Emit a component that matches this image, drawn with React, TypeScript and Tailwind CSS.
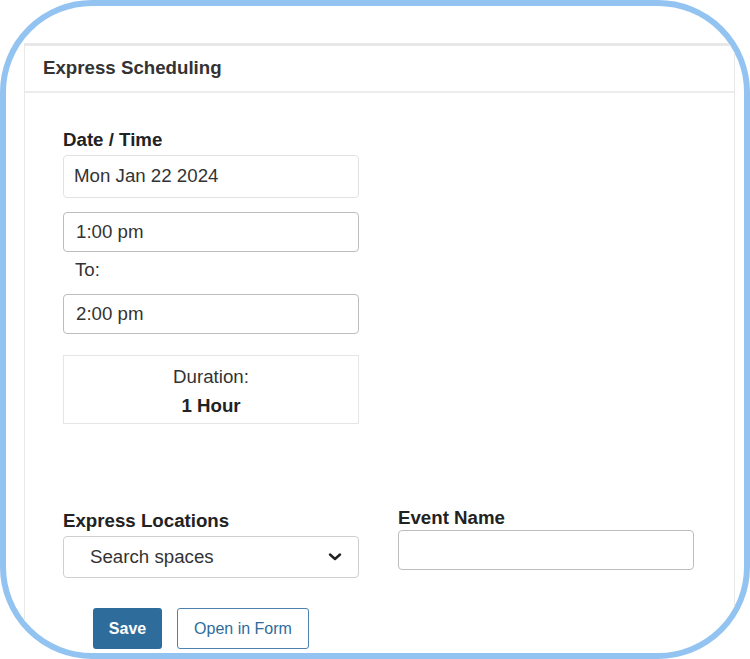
import React from 'react';

const font = { fontFamily: '"Liberation Sans", Arial, Helvetica, sans-serif' };

const App: React.FC = () => {
  return (
    <div className="w-[750px] h-[659px] bg-white text-[#333]" style={font}>
      {/* Rounded blue frame */}
      <div className="h-full rounded-[92px] border-[6px] border-[#93c4f1] overflow-hidden pl-[18px] pt-[37px] pr-[9px]">
        {/* Panel */}
        <div className="h-[700px] border-t-[3px] border-x border-[#e8e8e8]">
          <div className="h-[47px] border-b-2 border-[#ececec] flex items-center pl-[18px] text-[18.7px] font-bold text-[#333]">
            Express Scheduling
          </div>

          <div className="pl-[38px] pt-[36px]">
            <div className="w-[296px]">
              <p className="text-[18.7px] leading-[22px] font-bold text-[#222]">Date / Time</p>
              <div className="mt-[4px] h-[43px] border border-[#e2e2e2] rounded-[4px] flex items-center pl-[10px] text-[18.7px]">
                Mon Jan 22 2024
              </div>
              <div className="mt-[14px] h-[40px] border border-[#bdbdbd] rounded-[4px] flex items-center pl-[12px] text-[18.7px]">
                1:00 pm
              </div>
              <p className="mt-[7px] pl-[12px] text-[18.7px] leading-[22px]">To:</p>
              <div className="mt-[13px] h-[40px] border border-[#bdbdbd] rounded-[4px] flex items-center pl-[12px] text-[18.7px]">
                2:00 pm
              </div>
              <div className="mt-[21px] h-[69px] border border-[#e6e6e6] pt-[6px] text-center text-[18.7px] leading-[29px]">
                <p>Duration:</p>
                <p className="font-bold text-[#222]">1 Hour</p>
              </div>
            </div>

            {/* Locations + event name */}
            <div className="mt-[83px] flex items-start gap-[39px]">
              <div className="w-[296px] pt-[3px]">
                <p className="text-[18.7px] leading-[22px] font-bold text-[#222]">Express Locations</p>
                <div className="mt-[4px] h-[42px] border border-[#cfcfcf] rounded-[4px] flex items-center justify-between pl-[26px] pr-[16px] text-[18.7px]">
                  <span>Search spaces</span>
                  <svg width="14" height="8" viewBox="0 0 14 8" fill="none">
                    <polyline points="2,1.5 7,6 12,1.5" stroke="#222" strokeWidth="2.4" strokeLinecap="round" strokeLinejoin="round" />
                  </svg>
                </div>
              </div>
              <div className="w-[296px]">
                <p className="text-[18.7px] leading-[22px] font-bold text-[#222]">Event Name</p>
                <div className="mt-[1px] h-[40px] border border-[#bdbdbd] rounded-[4px]" />
              </div>
            </div>

            <div className="mt-[30px] ml-[30px] flex gap-[15px]">
              <button className="w-[69px] h-[41px] bg-[#2e6c9b] rounded-[3px] text-white font-bold text-[16px]">Save</button>
              <button className="w-[132px] h-[41px] border border-[#4d82b0] rounded-[3px] text-[#2e6c9b] text-[16px]">Open in Form</button>
            </div>
          </div>
        </div>
      </div>
    </div>
  );
};

export default App;
